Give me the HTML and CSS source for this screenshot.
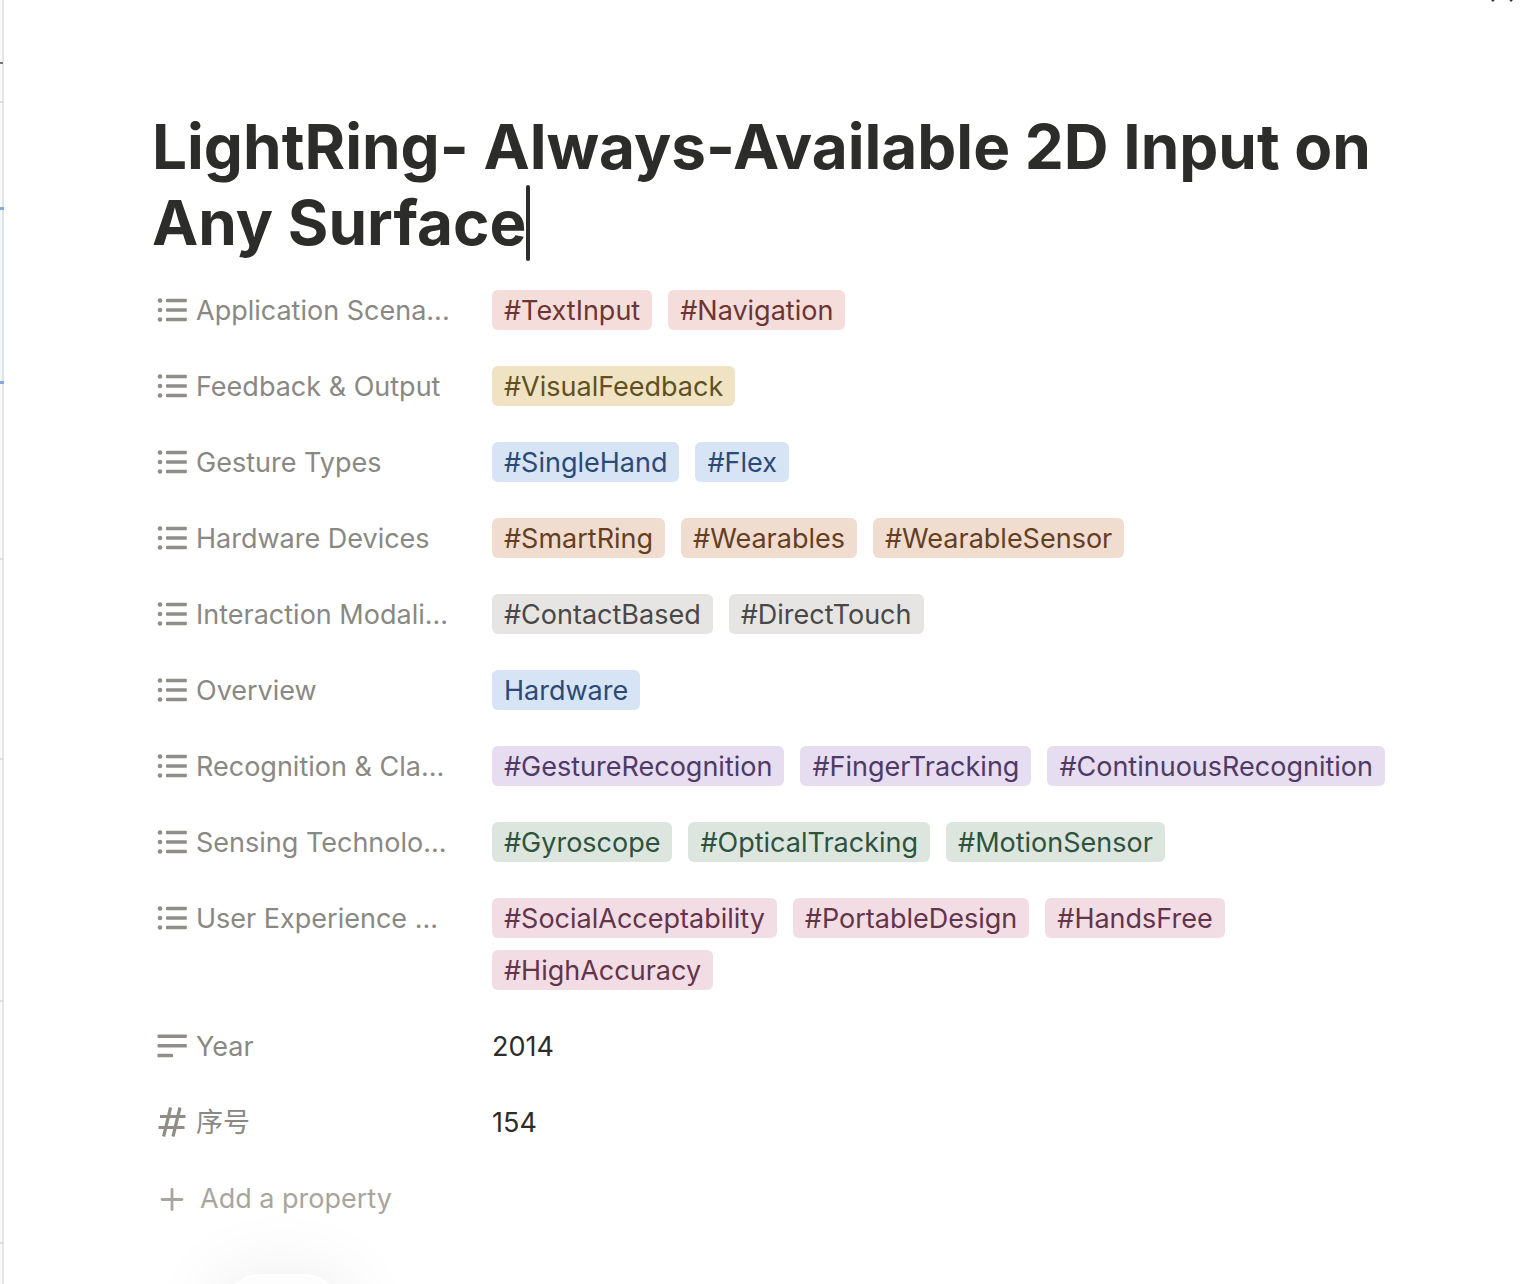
FILE: index.html
```html
<!DOCTYPE html>
<html lang="en">
<head>
<meta charset="utf-8">
<title>LightRing- Always-Available 2D Input on Any Surface</title>
<link rel="stylesheet" href="styles.css">
</head>
<body>
<svg class="defs" aria-hidden="true">
  <symbol id="list" viewBox="0 0 32 32">
    <g fill="currentColor"><circle cx="4" cy="6.500" r="2.300"/><circle cx="4" cy="16" r="2.300"/><circle cx="4" cy="25.500" r="2.300"/><rect x="10" y="4.700" width="20.800" height="3.600" rx=".8"/><rect x="10" y="14.200" width="20.800" height="3.600" rx=".8"/><rect x="10" y="23.700" width="20.800" height="3.600" rx=".8"/></g>
  </symbol>
  <symbol id="lines" viewBox="0 0 32 32">
    <g fill="currentColor"><rect x="1.500" y="4.400" width="29.300" height="3.600" rx=".8"/><rect x="1.500" y="14" width="29.300" height="3.600" rx=".8"/><rect x="1.500" y="23.700" width="15.500" height="3.600" rx=".8"/></g>
  </symbol>
  <symbol id="number" viewBox="0 0 32 32">
    <path d="M4 10.500H29.500M2.500 21.500H28.500M14.600 1.500L7.600 30.500M24 1.500L17 30.500" fill="none" stroke="currentColor" stroke-width="3.200"/>
  </symbol>
</svg>
<div class="page">
  <div class="backdrop" aria-hidden="true">
    <div class="cell head"></div>
    <div class="cell mid"></div>
    <div class="cell selected"></div>
    <div class="cell short"></div>
    <div class="cell tall"></div>
    <div class="cell taller"></div>
    <div class="cell taller"></div>
  </div>
  <main class="sheet">
    <h1 class="title">LightRing- Always-Available 2D Input on Any Surface<span class="caret"></span></h1>
    <dl class="props">
      <div class="prop">
        <dt class="label"><svg class="icon"><use href="#list"/></svg><span class="name">Application Scena...</span></dt>
        <dd class="value"><span class="tag red">#TextInput</span><span class="tag red">#Navigation</span></dd>
      </div>
      <div class="prop">
        <dt class="label"><svg class="icon"><use href="#list"/></svg><span class="name">Feedback &amp; Output</span></dt>
        <dd class="value"><span class="tag yellow">#VisualFeedback</span></dd>
      </div>
      <div class="prop">
        <dt class="label"><svg class="icon"><use href="#list"/></svg><span class="name">Gesture Types</span></dt>
        <dd class="value"><span class="tag blue">#SingleHand</span><span class="tag blue">#Flex</span></dd>
      </div>
      <div class="prop">
        <dt class="label"><svg class="icon"><use href="#list"/></svg><span class="name">Hardware Devices</span></dt>
        <dd class="value"><span class="tag orange">#SmartRing</span><span class="tag orange">#Wearables</span><span class="tag orange">#WearableSensor</span></dd>
      </div>
      <div class="prop">
        <dt class="label"><svg class="icon"><use href="#list"/></svg><span class="name">Interaction Modali...</span></dt>
        <dd class="value"><span class="tag gray">#ContactBased</span><span class="tag gray">#DirectTouch</span></dd>
      </div>
      <div class="prop">
        <dt class="label"><svg class="icon"><use href="#list"/></svg><span class="name">Overview</span></dt>
        <dd class="value"><span class="tag blue">Hardware</span></dd>
      </div>
      <div class="prop">
        <dt class="label"><svg class="icon"><use href="#list"/></svg><span class="name">Recognition &amp; Cla...</span></dt>
        <dd class="value"><span class="tag purple">#GestureRecognition</span><span class="tag purple">#FingerTracking</span><span class="tag purple">#ContinuousRecognition</span></dd>
      </div>
      <div class="prop">
        <dt class="label"><svg class="icon"><use href="#list"/></svg><span class="name">Sensing Technolo...</span></dt>
        <dd class="value"><span class="tag green">#Gyroscope</span><span class="tag green">#OpticalTracking</span><span class="tag green">#MotionSensor</span></dd>
      </div>
      <div class="prop">
        <dt class="label"><svg class="icon"><use href="#list"/></svg><span class="name">User Experience ...</span></dt>
        <dd class="value"><span class="tag pink">#SocialAcceptability</span><span class="tag pink">#PortableDesign</span><span class="tag pink">#HandsFree</span><span class="tag pink">#HighAccuracy</span></dd>
      </div>
      <div class="prop">
        <dt class="label"><svg class="icon"><use href="#lines"/></svg><span class="name">Year</span></dt>
        <dd class="value plain">2014</dd>
      </div>
      <div class="prop">
        <dt class="label"><svg class="icon"><use href="#number"/></svg><span class="name" lang="zh">序号</span></dt>
        <dd class="value plain">154</dd>
      </div>
    </dl>
    <button class="add" type="button"><svg class="icon" viewBox="0 0 32 32" aria-hidden="true"><path d="M16 7.500V27.500M6 17.500H26" fill="none" stroke="currentColor" stroke-width="2.800" stroke-linecap="round"/></svg><span class="name">Add a property</span></button>
  </main>
  <svg class="corner" viewBox="0 0 24 24" aria-hidden="true"><path d="M2 22L12 12L22 22" fill="none" stroke="#32302c" stroke-width="2.500"/></svg>
  <div class="pill" aria-hidden="true"></div>
</div>
</body>
</html>
```
FILE: styles.css
```css
* { box-sizing: border-box; }
body {
  margin: 0;
  background: #fff;
  color: #2c2c2b;
  font-family: Inter, "Noto Sans CJK SC", sans-serif;
  font-size: 27px;
  line-height: 42px;
}
.defs { display: none; }
.page {
  display: flex;
  position: relative;
  min-height: 100vh;
  overflow: hidden;
}

/* edge of the table behind the sheet */
.backdrop {
  flex: none;
  width: 4px;
  background: #fafafa;
  border-right: 2px solid #e5e5e5;
}
.cell {
  width: 4px;
  height: 106px;
  border-bottom: 2px solid #e0dfdc;
}
.head { height: 103px; background: linear-gradient(#777, #777) 0 62px / 3px 2px no-repeat; }
.mid { height: 107px; border-bottom: 3px solid #83a9e0; }
.selected { height: 174px; border-bottom: 3px solid #83a9e0; background: linear-gradient(90deg, #f4f8f8 2px, #e1e4e4 2px); }
.short { height: 176px; }
.tall { height: 200px; }
.taller { height: 242px; }

.sheet {
  flex: 1;
  min-width: 0;
  padding: 109px 120px 52px 148px;
}
.title {
  margin: 0 0 15px;
  font-size: 62px;
  line-height: 76px;
  font-weight: 700;
}
.caret {
  display: inline-block;
  width: 4px;
  height: 76px;
  border-radius: 2px;
  background: #2c2c2b;
  vertical-align: bottom;
}
.props {
  display: flex;
  flex-direction: column;
  gap: 8px;
  margin: 0 0 8px;
}
.prop { display: flex; gap: 20px; }
.label {
  display: flex;
  flex: none;
  align-items: center;
  gap: 8px;
  width: 320px;
  height: 68px;
  padding-left: 4px;
  color: #8a8883;
}
.icon { flex: none; width: 32px; height: 32px; color: #8f8d86; }
.name { padding-top: 2px; white-space: nowrap; }
.value {
  display: flex;
  flex: 1;
  flex-wrap: wrap;
  gap: 12px 16px;
  min-width: 0;
  margin: 0;
  padding: 14px 0;
}
.plain { padding-bottom: 12px; }
.tag {
  height: 40px;
  padding: 0 12px;
  border-radius: 6px;
  white-space: nowrap;
}
.red { background: #f4dddb; color: #6d3531; }
.yellow { background: #efe3c4; color: #61501f; }
.blue { background: #d6e4f6; color: #2c4a75; }
.orange { background: #f1ddd0; color: #643f22; }
.gray { background: #e6e5e3; color: #494846; }
.purple { background: #e6ddf0; color: #4f3a66; }
.green { background: #dce6de; color: #2e523d; }
.pink { background: #f3dde4; color: #63344a; }
.add {
  display: flex;
  align-items: center;
  gap: 12px;
  height: 68px;
  padding: 0 4px;
  border: 0;
  background: none;
  color: #a8a59d;
  font: inherit;
}
.add .icon { color: inherit; }
.corner {
  position: absolute;
  top: -21px;
  right: 6px;
  width: 24px;
  height: 24px;
}
.pill {
  position: absolute;
  bottom: -62px;
  left: 224px;
  width: 116px;
  height: 72px;
  border-radius: 36px;
  background: #fdfdfd;
  border: 2px solid #fff;
  box-shadow: 0 12px 72px 16px rgba(0, 0, 0, .07);
}
```
